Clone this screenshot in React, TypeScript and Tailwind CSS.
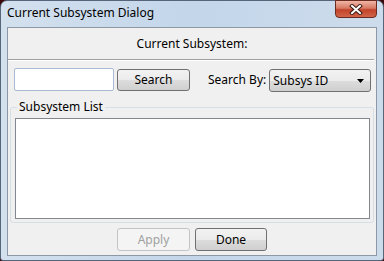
import React from "react";

const ui = { fontFamily: '"Noto Sans", "Liberation Sans", sans-serif' };

const CloseGlyph = () => (
	<svg width="14" height="11" viewBox="0 0 14 11">
		<path d="M3 2 L11 9 M11 2 L3 9" stroke="#3a1a14" strokeWidth="4" strokeLinecap="square" />
		<path d="M3 2 L11 9 M11 2 L3 9" stroke="#ffffff" strokeWidth="2" strokeLinecap="square" />
	</svg>
);

const VistaButton = ({
	label,
	width,
	disabled,
}: {
	label: string;
	width: string;
	disabled?: boolean;
}) => (
	<div
		className={`${width} h-[23px] rounded-[3px] border flex items-center justify-center text-[12px] ${
			disabled
				? "border-[#c2c4c6] bg-[#f4f4f4] text-[#a0a0a0]"
				: "border-[#707070] bg-[linear-gradient(#f2f2f2_0%,#ebebeb_50%,#dddddd_51%,#cfcfcf_100%)] text-black"
		}`}
	>
		{label}
	</div>
);

export default function App() {
	return (
		<div className="w-[384px] h-[261px] bg-[#3a0808] overflow-hidden" style={ui}>
			<div className="w-full h-full rounded-t-[7px] rounded-b-[3px] border border-[#56657a] bg-[linear-gradient(90deg,#d3e0ee_0%,#c3d6ea_50%,#cddcec_100%)] flex flex-col">
				{/* title bar */}
				<div className="h-[26px] flex items-start justify-between relative">
					<span className="pl-[6px] pt-[5px] text-[12px] leading-[14px] text-black">
						Current Subsystem Dialog
					</span>
					<div className="mr-[6px] mt-[-1px] w-[42px] h-[18px] rounded-b-[4px] border border-[#6b2a1f] bg-[linear-gradient(#efb5a6_0%,#d77a64_45%,#c2432a_55%,#d0654a_100%)] flex items-center justify-center">
						<CloseGlyph />
					</div>
				</div>

				{/* client area */}
				<div className="mx-[6px] h-[229px] border border-[#8e98a4] bg-[#f0f0f0] flex flex-col">
					<div className="h-[31px] flex items-center justify-center text-[12px] text-black">
						Current Subsystem:
					</div>
					<div className="mr-[2px] h-[1px] bg-[#a0a0a0]" />
					<div className="mr-[2px] h-[1px] bg-white" />

					<div className="mt-[7px] pl-[6px] flex items-start text-[12px]">
						<div className="w-[100px] h-[23px] border border-[#a9bbd2] rounded-[2px] bg-white" />
						<div className="ml-[3px] mt-[1px]">
							<VistaButton label="Search" width="w-[73px] !h-[22px]" />
						</div>
						<span className="ml-[18px] mt-[3px] text-black">Search By:</span>
						<div className="ml-[3px] mt-[1px] w-[102px] h-[23px] rounded-[3px] border border-[#707070] bg-[linear-gradient(#f2f2f2_0%,#ebebeb_50%,#dddddd_51%,#cfcfcf_100%)] flex items-center justify-between pl-[3px] pr-[6px]">
							<span className="text-black">Subsys ID</span>
							<svg width="7" height="4" viewBox="0 0 7 4">
								<path d="M0 0 H7 L3.5 4 Z" fill="#000" />
							</svg>
						</div>
					</div>

					<div className="mt-[15px] ml-[2px] w-[364px] h-[116px] rounded-[3px] border border-[#d5dfe5] relative">
						<span className="absolute left-[6px] top-[-9px] px-[2px] bg-[#f0f0f0] text-[12px] leading-[16px] text-black">
							Subsystem List
						</span>
						<div className="mt-[10px] ml-[4px] w-[355px] h-[101px] border border-[#828790] bg-white" />
					</div>

					<div className="mt-[5px] flex justify-center gap-[5px]">
						<VistaButton label="Apply" width="w-[73px]" disabled />
						<VistaButton label="Done" width="w-[72px]" />
					</div>
				</div>
			</div>
		</div>
	);
}
